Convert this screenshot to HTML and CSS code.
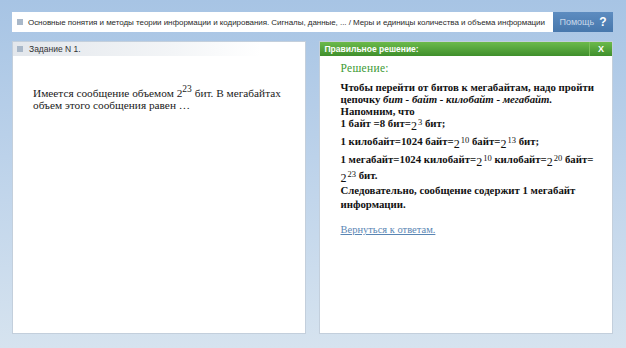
FILE: index.html
```html
<!DOCTYPE html>
<html lang="ru">
<head>
  <meta charset="UTF-8">
  <title>Задание N 1</title>
  <link rel="stylesheet" href="styles.css">
</head>
<body>
  <div class="page">
    <div class="top-bar">
      <div class="crumb"><span class="square"></span>Основные понятия и методы теории информации и кодирования. Сигналы, данные, ... / Меры и единицы количества и объема информации</div>
      <div class="help">Помощь <b>?</b></div>
    </div>

    <div class="panels">
      <div class="panel">
        <div class="task-head"><span class="square"></span>Задание N 1.</div>
        <div class="question">Имеется сообщение объемом 2<sup>23</sup> бит. В мегабайтах<br>объем этого сообщения равен …</div>
      </div>

      <div class="panel">
        <div class="solution-head">
          <span>Правильное решение:</span>
          <span class="close">X</span>
        </div>
        <div class="solution">
          <div class="solution-title">Решение:</div>
          <p class="intro">Чтобы перейти от битов к мегабайтам, надо пройти<br>цепочку <i>бит - байт - килобайт - мегабайт.</i><br>Напомним, что<br>1 байт =8 бит=<span class="base">2</span><sup>3</sup> бит;</p>
          <p class="kilo">1 килобайт=1024 байт=<span class="base">2</span><sup>10</sup> байт=<span class="base">2</span><sup>13</sup> бит;</p>
          <p class="mega">1 мегабайт=1024 килобайт=<span class="base">2</span><sup>10</sup> килобайт=<span class="base">2</span><sup>20</sup> байт=<br><span class="base">2</span><sup>23</sup> бит.</p>
          <p class="total">Следовательно, сообщение содержит 1 мегабайт<br>информации.</p>
          <a href="#" class="back">Вернуться к ответам.</a>
        </div>
      </div>
    </div>
  </div>
  <div class="bottom-line"></div>
</body>
</html>
```

FILE: styles.css
```css
:root {
  --panel-border: #c3cfdc;
  --green: #3d9a35;
  --link: #5a86b4;
}

body {
  margin: 0;
  padding: 0;
  height: 348px;
  overflow: hidden;
  font-family: 'Liberation Sans', Arial, sans-serif;
  background: linear-gradient(to bottom, #a7c4e4 0%, #bcd2ea 45%, #d6e3ef 100%);
}

.page {
  padding: 12px 13px 0 12px;
  height: 334px;
}

.square {
  display: inline-block;
  flex-shrink: 0;
  width: 6px;
  height: 6px;
  background: #a9b8c9;
  margin-right: 6px;
}

/* top bar */

.top-bar {
  display: flex;
  height: 20px;
}

.crumb {
  flex: 1;
  display: flex;
  align-items: center;
  background: white;
  padding-left: 5px;
  font-size: 8px;
  color: #2a2a2a;
  letter-spacing: -0.05px;
  white-space: nowrap;
  overflow: hidden;
}

.crumb .square {
  margin-right: 5px;
}

.help {
  width: 60px;
  display: flex;
  align-items: center;
  justify-content: center;
  gap: 5px;
  background: linear-gradient(to bottom, #5d8cc0, #4777ac);
  color: #c9d8ea;
  font-size: 9px;
}

.help b {
  color: white;
  font-size: 12px;
}

/* panels */

.panels {
  display: flex;
  gap: 13px;
  margin-top: 9px;
}

.panel {
  background: white;
  border: 1px solid var(--panel-border);
  height: 291px;
}

.panels .panel:first-child {
  width: 292px;
}

.panels .panel:last-child {
  width: 293px;
}

.task-head {
  height: 14px;
  display: flex;
  align-items: center;
  padding-left: 4px;
  font-size: 8.5px;
  color: #333;
  background: linear-gradient(to right, #e3e7ec 0%, #f3f5f7 55%, white 85%);
}

.question {
  font-family: 'Liberation Serif', 'Times New Roman', serif;
  font-size: 11.3px;
  line-height: 12px;
  color: #1a1a1a;
  padding: 31px 0 0 20px;
  white-space: nowrap;
}

.question sup {
  font-size: 9.5px;
  vertical-align: 5px;
  line-height: 0;
}

/* solution */

.solution-head {
  height: 14px;
  display: flex;
  align-items: center;
  justify-content: space-between;
  padding-left: 5px;
  color: white;
  font-size: 8.5px;
  font-weight: bold;
  background: linear-gradient(to bottom, #6cba4b, #3f8f2c);
}

.close {
  width: 22px;
  height: 14px;
  line-height: 14px;
  text-align: center;
  font-size: 9px;
  border-left: 1px solid #7cc05c;
}

.solution {
  font-family: 'Liberation Serif', 'Times New Roman', serif;
  padding: 5px 0 0 21px;
  color: #111;
  white-space: nowrap;
}

.solution-title {
  color: var(--green);
  font-size: 11.5px;
  line-height: 14px;
  letter-spacing: 0.3px;
  margin-bottom: 6px;
}

.solution p {
  margin: 0;
  font-size: 10.8px;
  font-weight: bold;
  line-height: 12px;
}

.solution p.intro,
.solution p.kilo {
  margin-bottom: 6px;
}

.solution p.mega {
  line-height: 16px;
  margin-top: -2px;
}

.solution p.total {
  line-height: 14px;
  margin-bottom: 12px;
}

.solution .base {
  font-weight: normal;
  font-size: 12px;
  vertical-align: -3px;
  line-height: 0;
}

.solution sup {
  font-size: 8.5px;
  font-weight: normal;
  vertical-align: 2px;
  line-height: 0;
  margin-left: 1px;
}

.back {
  display: block;
  font-size: 10.5px;
  line-height: 14px;
  color: var(--link);
}

.bottom-line {
  height: 2px;
  margin-top: 11px;
  background: #a9bdd0;
  border-top: 1px solid #c7d6e4;
}
```
